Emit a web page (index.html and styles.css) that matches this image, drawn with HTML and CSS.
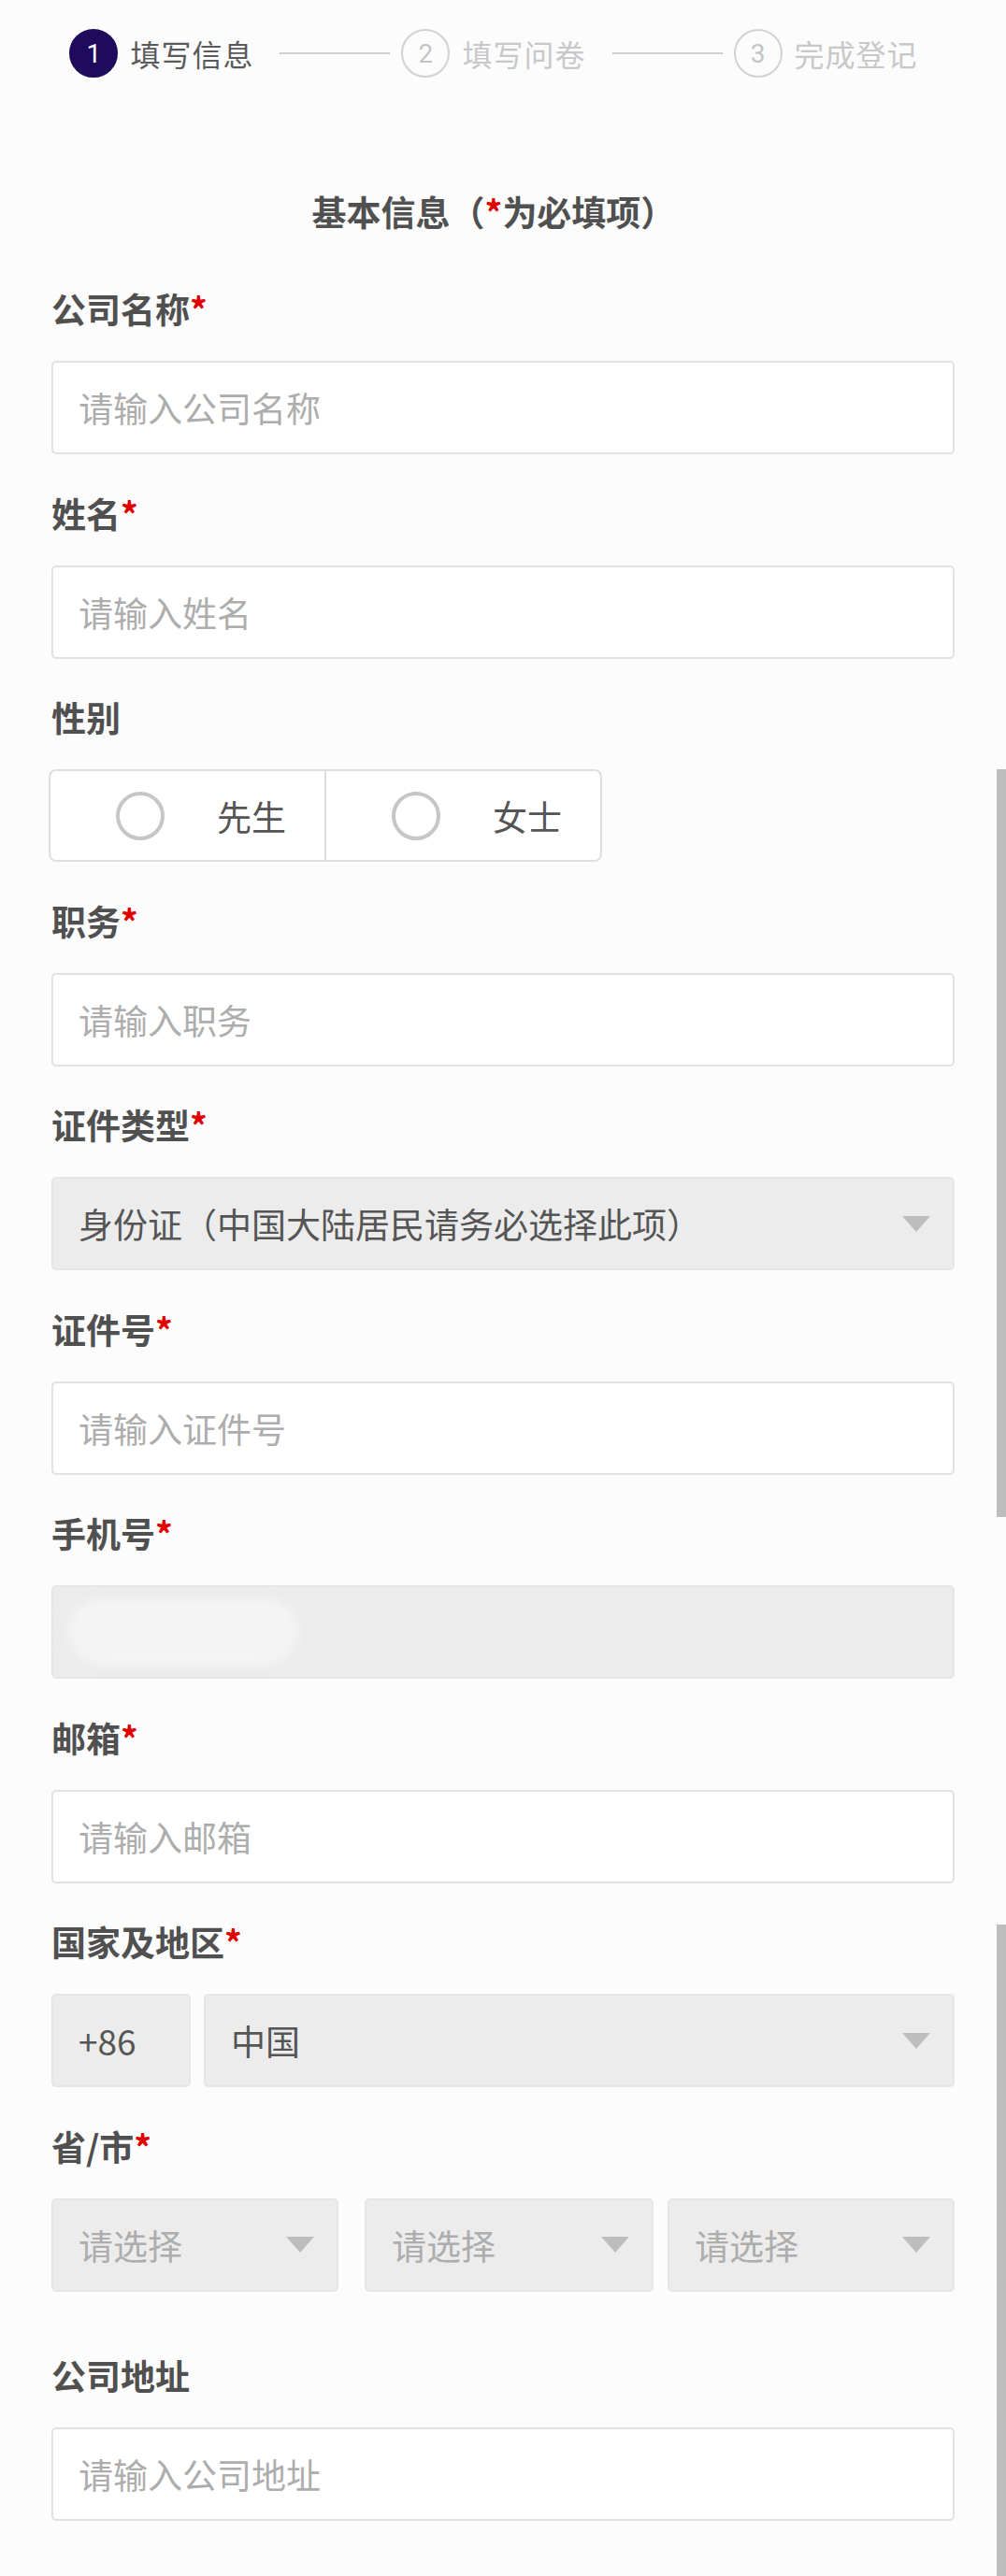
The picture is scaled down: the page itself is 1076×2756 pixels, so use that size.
FILE: index.html
```html
<!DOCTYPE html>
<html lang="zh-CN">
<head>
<meta charset="utf-8">
<title>填写信息</title>
<link rel="stylesheet" href="styles.css">
</head>
<body>
<div class="page">
  <div class="stepper">
    <div class="step active"><span class="num">1</span><span class="step-text">填写信息</span></div>
    <span class="step-line"></span>
    <div class="step"><span class="num">2</span><span class="step-text">填写问卷</span></div>
    <span class="step-line"></span>
    <div class="step"><span class="num">3</span><span class="step-text">完成登记</span></div>
  </div>

  <h2 class="title">基本信息（<span class="req">*</span>为必填项）</h2>

  <form class="form">
    <div class="field">
      <div class="label">公司名称<span class="req">*</span></div>
      <div class="input"><span class="ph">请输入公司名称</span></div>
    </div>
    <div class="field">
      <div class="label">姓名<span class="req">*</span></div>
      <div class="input"><span class="ph">请输入姓名</span></div>
    </div>
    <div class="field">
      <div class="label">性别</div>
      <div class="radio-group">
        <div class="radio-cell"><span class="radio"></span><span class="radio-text">先生</span></div>
        <div class="radio-cell"><span class="radio"></span><span class="radio-text">女士</span></div>
      </div>
    </div>
    <div class="field">
      <div class="label">职务<span class="req">*</span></div>
      <div class="input"><span class="ph">请输入职务</span></div>
    </div>
    <div class="field">
      <div class="label">证件类型<span class="req">*</span></div>
      <div class="select"><span class="val">身份证（中国大陆居民请务必选择此项）</span><span class="caret"></span></div>
    </div>
    <div class="field">
      <div class="label">证件号<span class="req">*</span></div>
      <div class="input"><span class="ph">请输入证件号</span></div>
    </div>
    <div class="field">
      <div class="label">手机号<span class="req">*</span></div>
      <div class="select phone"><span class="blur"></span></div>
    </div>
    <div class="field">
      <div class="label">邮箱<span class="req">*</span></div>
      <div class="input"><span class="ph">请输入邮箱</span></div>
    </div>
    <div class="field">
      <div class="label">国家及地区<span class="req">*</span></div>
      <div class="row">
        <div class="select code"><span class="val">+86</span></div>
        <div class="select grow"><span class="val">中国</span><span class="caret"></span></div>
      </div>
    </div>
    <div class="field field-extra">
      <div class="label">省/市<span class="req">*</span></div>
      <div class="row">
        <div class="select s1"><span class="ph">请选择</span><span class="caret"></span></div>
        <div class="select s2"><span class="ph">请选择</span><span class="caret"></span></div>
        <div class="select s3"><span class="ph">请选择</span><span class="caret"></span></div>
      </div>
    </div>
    <div class="field">
      <div class="label">公司地址</div>
      <div class="input"><span class="ph">请输入公司地址</span></div>
    </div>
  </form>

  <div class="scrollbar sb1"></div>
  <div class="scrollbar sb2"></div>
</div>
</body>
</html>
```

FILE: styles.css
```css
html, body {
  margin: 0;
  padding: 0;
  background: #fcfcfc;
}
body {
  font-family: "Noto Sans CJK SC", "Noto Sans", sans-serif;
  color: #555;
}
.page {
  position: relative;
  width: 1076px;
  min-height: 2756px;
  overflow: hidden;
}

/* stepper */
.stepper {
  display: flex;
  align-items: center;
  justify-content: center;
  padding: 31px 20px 0 0;
  height: 52px;
}
.step {
  display: flex;
  align-items: center;
}
.num {
  width: 52px;
  height: 52px;
  box-sizing: border-box;
  border-radius: 50%;
  border: 2px solid #d2d2d2;
  color: #c4c4c4;
  display: flex;
  align-items: center;
  justify-content: center;
  font-size: 28px;
  font-family: "Roboto", "Noto Sans", sans-serif;
}
.step.active .num {
  background: #1f0a5c;
  border-color: #1f0a5c;
  color: #fff;
}
.step-text {
  margin-left: 13px;
  font-size: 32px;
  line-height: 40px;
  color: #c8c8c8;
  letter-spacing: 1px;
}
.step.active .step-text {
  color: #5a5a5a;
}
.step-line {
  width: 118px;
  height: 2px;
  background: #cfcfcf;
  margin: 0 12px 0 28px;
}

/* title */
.title {
  margin: 119px 20px 0 0;
  text-align: center;
  font-size: 37px;
  line-height: 48px;
  font-weight: bold;
  color: #505050;
}
.req {
  color: #e00000;
  font-weight: bold;
}

/* form */
.form {
  margin: 58px 55px 0 55px;
}
.field {
  margin-bottom: 40.5px;
}
.field-extra {
  margin-bottom: 67px;
}
.label {
  font-size: 37px;
  line-height: 44px;
  font-weight: bold;
  color: #505050;
  margin-bottom: 34px;
}
.input, .select {
  height: 100px;
  box-sizing: border-box;
  border: 2px solid #e2e2e2;
  border-radius: 5px;
  background: #fff;
  display: flex;
  align-items: center;
  padding: 0 24px 0 27px;
  font-size: 37px;
}
.select {
  background: #ececec;
  border-color: #e6e6e6;
}
.ph {
  color: #adadad;
  flex: 1;
}
.val {
  color: #555;
  flex: 1;
}
.caret {
  width: 0;
  height: 0;
  border-left: 15px solid transparent;
  border-right: 15px solid transparent;
  border-top: 17px solid #bdbdbd;
}

/* radio */
.radio-group {
  display: flex;
  width: 592px;
  height: 99px;
  box-sizing: border-box;
  border: 2px solid #dedede;
  border-radius: 8px;
  margin-left: -3px;
  background: #fff;
}
.radio-cell {
  flex: 1;
  display: flex;
  align-items: center;
  padding-left: 70px;
}
.radio-cell + .radio-cell {
  border-left: 2px solid #dedede;
}
.radio {
  width: 52px;
  height: 52px;
  box-sizing: border-box;
  border: 4px solid #c6c6c6;
  border-radius: 50%;
}
.radio-text {
  margin-left: 56px;
  font-size: 37px;
  color: #555;
}

/* phone */
.phone {
  padding-left: 16px;
}
.blur {
  width: 246px;
  height: 72px;
  border-radius: 40px;
  background: #f4f4f4;
  filter: blur(6px);
}

/* rows */
.row {
  display: flex;
}
.code {
  width: 149px;
  margin-right: 14px;
}
.grow {
  flex: 1;
}
.s1 { width: 307px; margin-right: 28px; }
.s2 { width: 309px; margin-right: 15px; }
.s3 { flex: 1; }

/* scrollbars (overlay) */
.scrollbar {
  position: absolute;
  right: 0;
  width: 10px;
  background: #bdbdbd;
}
.sb1 {
  top: 823px;
  height: 800px;
}
.sb2 {
  top: 2059px;
  bottom: 0;
}
```
